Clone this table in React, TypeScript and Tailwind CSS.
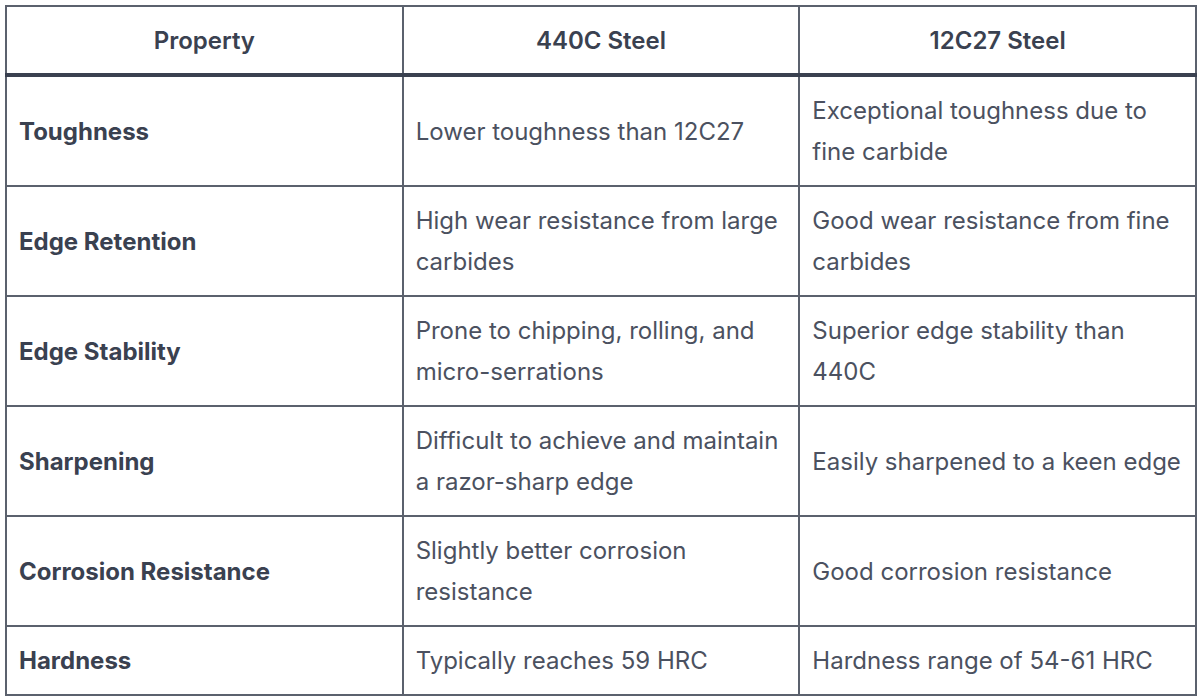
const rows = [
  ["Toughness", "Lower toughness than 12C27", "Exceptional toughness due to fine carbide"],
  ["Edge Retention", "High wear resistance from large carbides", "Good wear resistance from fine carbides"],
  ["Edge Stability", "Prone to chipping, rolling, and micro-serrations", "Superior edge stability than 440C"],
  ["Sharpening", "Difficult to achieve and maintain a razor-sharp edge", "Easily sharpened to a keen edge"],
  ["Corrosion Resistance", "Slightly better corrosion resistance", "Good corrosion resistance"],
  ["Hardness", "Typically reaches 59 HRC", "Hardness range of 54-61 HRC"],
];

const App = () => {
  return (
    <div className="w-[1200px] h-[699px] bg-white pt-[5px] pl-[5px] font-['Inter',sans-serif]">
      <table className="w-[1192px] table-fixed border-collapse border-2 border-[#5b616d] text-[24px] leading-[41px]">
        <thead>
          <tr>
            <th className="border-2 border-[#5b616d] border-b-[4px] border-b-[#3a4150] h-[69px] px-[12px] font-semibold text-[#3a4150]">Property</th>
            <th className="border-2 border-[#5b616d] border-b-[4px] border-b-[#3a4150] px-[12px] font-semibold text-[#3a4150]">440C Steel</th>
            <th className="border-2 border-[#5b616d] border-b-[4px] border-b-[#3a4150] px-[12px] font-semibold text-[#3a4150]">12C27 Steel</th>
          </tr>
        </thead>
        <tbody>
          {rows.map((row) => (
            <tr key={row[0]}>
              <td className="border-2 border-[#5b616d] px-[12px] py-[13px] font-bold text-[#3a4150]">{row[0]}</td>
              <td className="border-2 border-[#5b616d] px-[12px] py-[13px] text-[#4b5160]">{row[1]}</td>
              <td className="border-2 border-[#5b616d] px-[12px] py-[13px] text-[#4b5160]">{row[2]}</td>
            </tr>
          ))}
        </tbody>
      </table>
    </div>
  );
};

export default App;
